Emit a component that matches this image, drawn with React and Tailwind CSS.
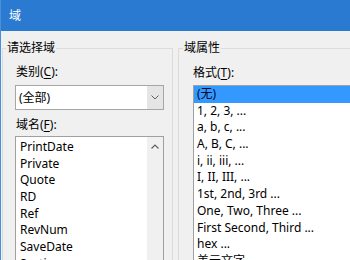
import React from "react";

const FONT = { fontFamily: '"Noto Sans", "Noto Sans CJK SC", sans-serif' };

const leftItems = ["PrintDate", "Private", "Quote", "RD", "Ref", "RevNum", "SaveDate", "Section"];
const rightItems = [
  "1, 2, 3, ...",
  "a, b, c, ...",
  "A, B, C, ...",
  "i, ii, iii, ...",
  "I, II, III, ...",
  "1st, 2nd, 3rd ...",
  "One, Two, Three ...",
  "First Second, Third ...",
  "hex ...",
  "美元文字",
];

function U({ children }) {
  return <span className="underline underline-offset-2">{children}</span>;
}

export default function App() {
  return (
    <div
      className="w-[350px] h-[260px] overflow-hidden bg-[#f0f0f0] border-l border-[#4a90d9] flex flex-col text-[12px] text-black"
      style={FONT}
    >
      <div className="h-[31px] shrink-0 bg-[#2b7ad1] flex items-center pl-[8px] text-white leading-[16px]">
        域
      </div>
      <div className="flex pt-[9px]">
        <fieldset className="ml-[1px] w-[171px] h-[300px] shrink-0 border border-[#dcdcdc] pl-[12px]">
          <legend className="ml-[-9px] px-[1px] leading-[16px]">请选择域</legend>
          <div className="mt-[8px] pl-[1px] leading-[16px]">
            类别(<U>C</U>):
          </div>
          <div className="mt-[5px] w-[149px] h-[25px] border border-[#a6a6a6] bg-white flex">
            <div className="flex-1 pl-[3px] leading-[23px]">(全部)</div>
            <div className="w-[16px] h-full bg-[#e5e5e5] flex items-center justify-center">
              <svg width="8" height="5" viewBox="0 0 8 5">
                <path d="M0.5 0.5 L4 4 L7.5 0.5" fill="none" stroke="#606060" strokeWidth="1" />
              </svg>
            </div>
          </div>
          <div className="mt-[7px] pl-[1px] leading-[16px]">
            域名(<U>F</U>):
          </div>
          <div className="mt-[3px] w-[149px] h-[140px] border border-[#a0a0a0] bg-white flex">
            <div className="flex-1 pt-[2px]">
              {leftItems.map((t) => (
                <div key={t} className="h-[16.7px] leading-[16.7px] pl-[4px] whitespace-nowrap">
                  {t}
                </div>
              ))}
            </div>
            <div className="w-[16px] bg-[#f0f0f0] flex justify-center pt-[7px]">
              <svg width="8" height="5" viewBox="0 0 8 5">
                <path d="M0.5 4.5 L4 1 L7.5 4.5" fill="none" stroke="#606060" strokeWidth="1.2" />
              </svg>
            </div>
          </div>
        </fieldset>
        <fieldset className="ml-[5px] w-[250px] h-[300px] shrink-0 border border-[#dcdcdc] pl-[14px]">
          <legend className="ml-[-10px] px-[1px] leading-[16px]">域属性</legend>
          <div className="mt-[9px] leading-[16px]">
            格式(<U>T</U>):
          </div>
          <div className="mt-[4px] w-[200px] h-[200px] border border-[#a0a0a0] bg-white">
            <div className="h-[16.7px] leading-[16.7px] pl-[3px] bg-[#3399ff] text-[#0a0a2a] whitespace-nowrap">
              (无)
            </div>
            {rightItems.map((t) => (
              <div key={t} className="h-[16.7px] leading-[16.7px] pl-[3px] whitespace-nowrap">
                {t}
              </div>
            ))}
          </div>
        </fieldset>
      </div>
    </div>
  );
}
